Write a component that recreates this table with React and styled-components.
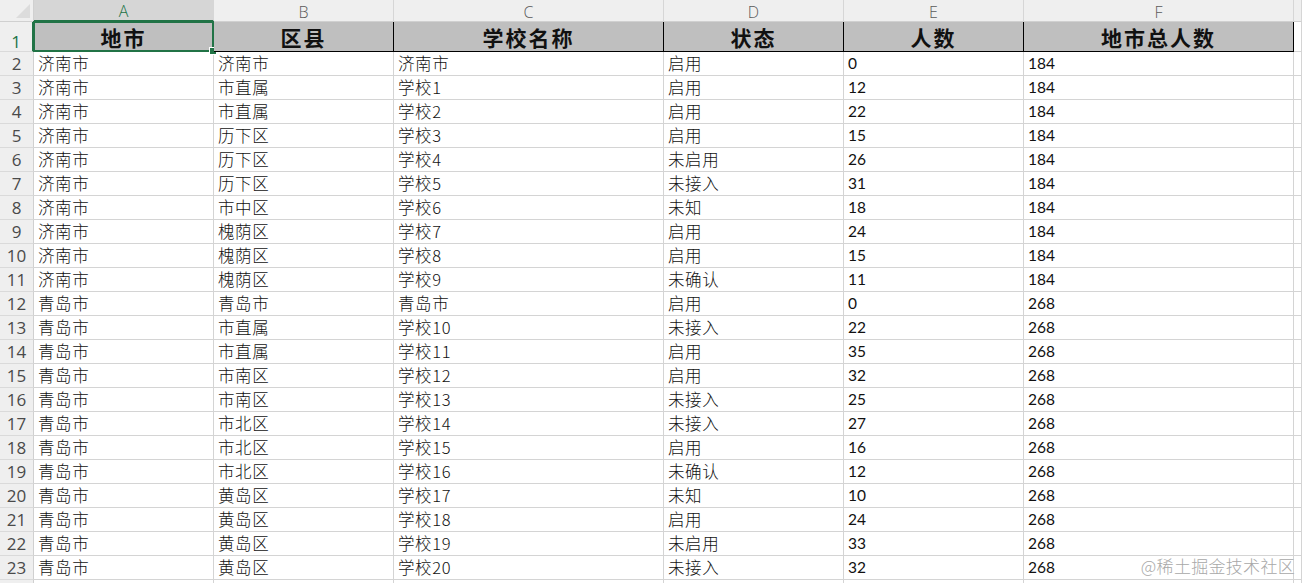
import React from "react";
import styled, { createGlobalStyle, css } from "styled-components";

const Global = createGlobalStyle`
  html, body { margin: 0; padding: 0; background: #fff; overflow: hidden; }
  #root { width: 1302px; height: 583px; }
`;

const GREEN = "#217346";
const GRID = "#d4d4d4";

const Sheet = styled.div`
  position: relative;
  display: grid;
  grid-template-columns: 34px 180px 180px 270px 180px 180px 270px 1fr;
  grid-template-rows: 22px 30px repeat(23, 24px);
  width: 1302px;
  height: 583px;
  overflow: hidden;
  background: #fff;
  font-family: "Noto Sans CJK SC", sans-serif;
`;

const Corner = styled.div`
  position: relative;
  background: #efefef;
  border-right: 1px solid #d0d0d0;
  border-bottom: 1px solid #d0d0d0;
  box-sizing: border-box;
  &::after {
    content: "";
    position: absolute;
    right: 3px;
    bottom: 3px;
    width: 0;
    height: 0;
    border-left: 14px solid transparent;
    border-bottom: 14px solid #dcdcdc;
  }
`;

const ColHead = styled.div`
  background: ${(p) => (p.$active ? "#d6d6d6" : "#efefef")};
  color: ${(p) => (p.$active ? GREEN : "#5a5a5a")};
  border-right: 1px solid #d6d6d6;
  border-bottom: ${(p) => (p.$active ? `2px solid ${GREEN}` : "1px solid #d0d0d0")};
  box-sizing: border-box;
  display: flex;
  align-items: center;
  justify-content: center;
  font-family: "Open Sans", "Liberation Sans", sans-serif;
  font-weight: 300;
  font-size: 16px;
  padding-top: 2px;
`;

const RowHead = styled.div`
  background: #efefef;
  color: ${(p) => (p.$active ? GREEN : "#4a4a4a")};
  border-right: ${(p) => (p.$active ? `2px solid ${GREEN}` : "1px solid #d0d0d0")};
  border-bottom: 1px solid #dadada;
  box-sizing: border-box;
  display: flex;
  align-items: ${(p) => (p.$tall ? "flex-end" : "center")};
  justify-content: center;
  padding-bottom: ${(p) => (p.$tall ? "1px" : "0")};
  font-family: "Open Sans", "Liberation Sans", sans-serif;
  font-size: 17px;
  line-height: 1;
`;

const HeadCell = styled.div`
  position: relative;
  background: #bfbfbf;
  border-right: 1px solid #000;
  border-bottom: 1px solid #000;
  box-sizing: border-box;
  display: flex;
  align-items: center;
  justify-content: center;
  font-family: "Noto Sans CJK SC", serif;
  font-weight: 700;
  font-size: 21px;
  letter-spacing: 2px;
  color: #111;
  padding-top: 1px;
`;

const Cell = styled.div`
  border-right: 1px solid ${GRID};
  border-bottom: 1px solid ${GRID};
  box-sizing: border-box;
  display: flex;
  align-items: center;
  padding-left: 4px;
  padding-bottom: 1px;
  color: #111;
  white-space: nowrap;
  overflow: hidden;
  ${(p) =>
    p.$num
      ? css`
          font-family: Lato, "Liberation Sans", sans-serif;
          font-size: 15.5px;
        `
      : css`
          font-family: "Noto Sans CJK SC", sans-serif;
          font-weight: 300;
          font-size: 16.5px;
          letter-spacing: 0.6px;
        `}
`;

const EmptyCell = styled.div`
  border-right: 1px solid ${GRID};
  border-bottom: 1px solid ${GRID};
  box-sizing: border-box;
`;

const Selection = styled.div`
  position: absolute;
  left: -1px;
  top: -1px;
  right: -1px;
  bottom: -1px;
  border: 2px solid ${GREEN};
  pointer-events: none;
  &::after {
    content: "";
    position: absolute;
    right: -5px;
    bottom: -5px;
    width: 6px;
    height: 6px;
    background: ${GREEN};
    border: 1px solid #fff;
  }
`;

const Watermark = styled.div`
  position: absolute;
  right: 7px;
  bottom: 5px;
  font-family: "Noto Sans CJK SC", sans-serif;
  font-weight: 300;
  font-size: 17px;
  color: #a8a8a8;
  letter-spacing: 0.3px;
  pointer-events: none;
`;

const cols = ["A", "B", "C", "D", "E", "F", ""];
const headers = ["地市", "区县", "学校名称", "状态", "人数", "地市总人数"];

const rows = [
  ["济南市", "济南市", "济南市", "启用", "0", "184"],
  ["济南市", "市直属", "学校1", "启用", "12", "184"],
  ["济南市", "市直属", "学校2", "启用", "22", "184"],
  ["济南市", "历下区", "学校3", "启用", "15", "184"],
  ["济南市", "历下区", "学校4", "未启用", "26", "184"],
  ["济南市", "历下区", "学校5", "未接入", "31", "184"],
  ["济南市", "市中区", "学校6", "未知", "18", "184"],
  ["济南市", "槐荫区", "学校7", "启用", "24", "184"],
  ["济南市", "槐荫区", "学校8", "启用", "15", "184"],
  ["济南市", "槐荫区", "学校9", "未确认", "11", "184"],
  ["青岛市", "青岛市", "青岛市", "启用", "0", "268"],
  ["青岛市", "市直属", "学校10", "未接入", "22", "268"],
  ["青岛市", "市直属", "学校11", "启用", "35", "268"],
  ["青岛市", "市南区", "学校12", "启用", "32", "268"],
  ["青岛市", "市南区", "学校13", "未接入", "25", "268"],
  ["青岛市", "市北区", "学校14", "未接入", "27", "268"],
  ["青岛市", "市北区", "学校15", "启用", "16", "268"],
  ["青岛市", "市北区", "学校16", "未确认", "12", "268"],
  ["青岛市", "黄岛区", "学校17", "未知", "10", "268"],
  ["青岛市", "黄岛区", "学校18", "启用", "24", "268"],
  ["青岛市", "黄岛区", "学校19", "未启用", "33", "268"],
  ["青岛市", "黄岛区", "学校20", "未接入", "32", "268"],
];

export default function App() {
  return (
    <>
      <Global />
      <Sheet>
        <Corner />
        {cols.map((c, i) => (
          <ColHead key={i} $active={c === "A"}>
            {c}
          </ColHead>
        ))}

        <RowHead $active $tall>
          1
        </RowHead>
        {headers.map((h, i) => (
          <HeadCell key={h}>
            {h}
            {i === 0 && <Selection />}
          </HeadCell>
        ))}
        <EmptyCell />

        {rows.map((r, ri) => (
          <React.Fragment key={ri}>
            <RowHead>{ri + 2}</RowHead>
            {r.map((v, ci) => (
              <Cell key={ci} $num={ci >= 4}>
                {v}
              </Cell>
            ))}
            <EmptyCell />
          </React.Fragment>
        ))}

        <RowHead />
        {cols.map((c, i) => (
          <EmptyCell key={i} />
        ))}

        <Watermark>@稀土掘金技术社区</Watermark>
      </Sheet>
    </>
  );
}
